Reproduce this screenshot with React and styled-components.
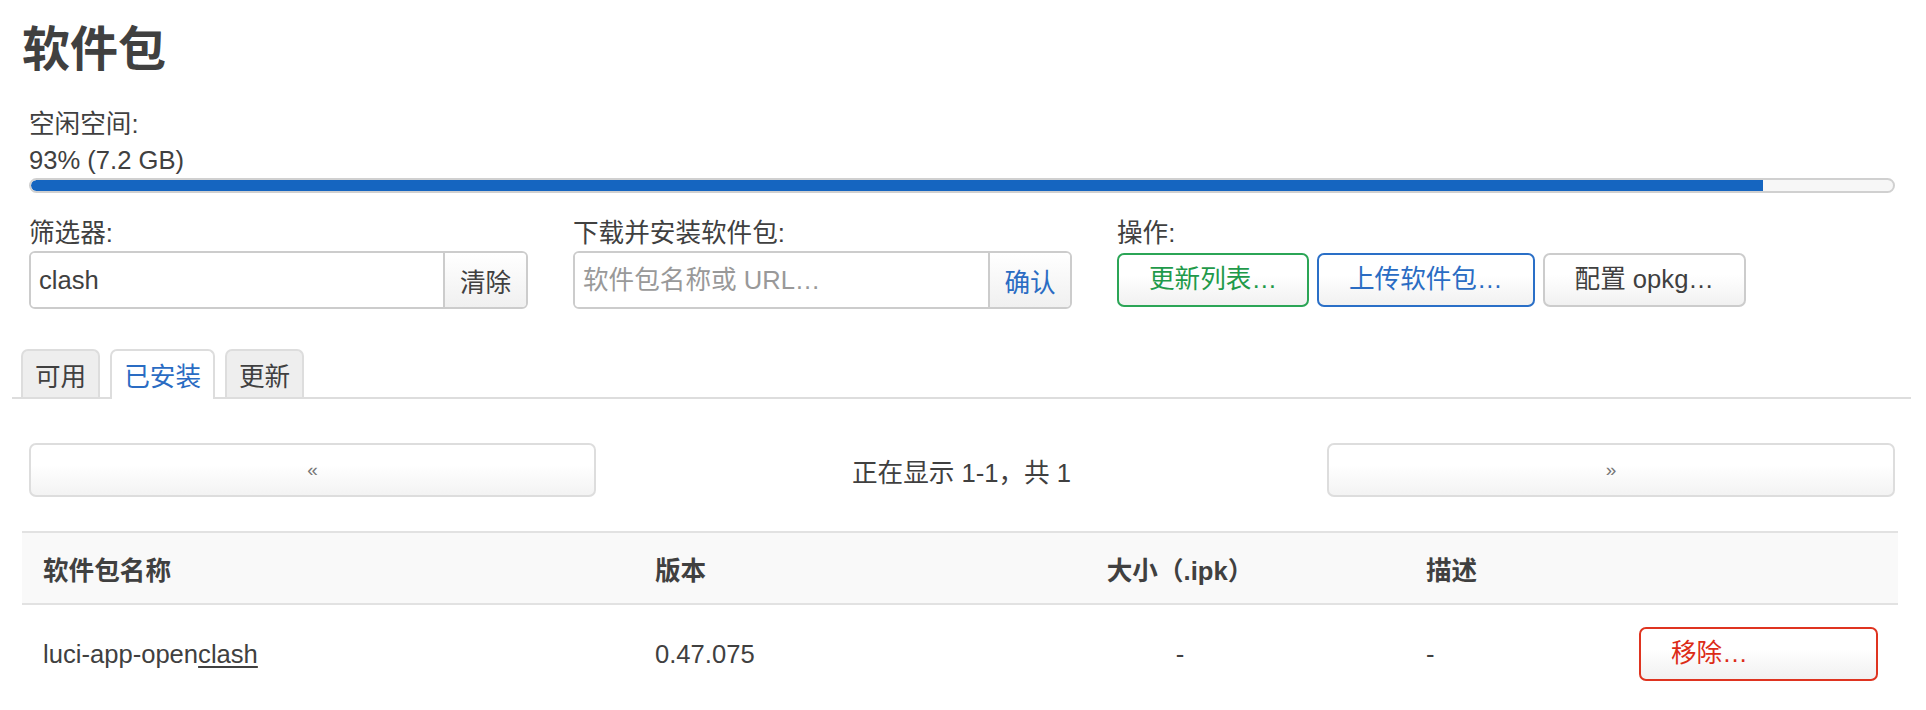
import styled, { createGlobalStyle } from "styled-components";

const GlobalStyle = createGlobalStyle`
  html, body {
    margin: 0;
    padding: 0;
    background: #fff;
  }
  body {
    font-family: "Liberation Sans", "Noto Sans CJK SC", sans-serif;
    font-size: 25.6px;
    color: #404040;
  }
  * { box-sizing: border-box; }
`;

const Page = styled.div`
  width: 1926px;
  padding: 20px 15px 0 12px;
`;

const Title = styled.h2`
  margin: 0 0 0 10px;
  font-size: 48px;
  line-height: 60px;
  font-weight: bold;
  color: #404040;
`;

const Section = styled.div`
  padding: 0 16px 0 17px;
`;

const FreeSpace = styled.div`
  margin-top: 26px;
  line-height: 36px;
`;

const Bar = styled.div`
  height: 15px;
  border: 2px solid #d0d0d0;
  border-radius: 8px;
  background: #f7f7f7;
  overflow: hidden;
`;

const BarFill = styled.div`
  height: 100%;
  background: #1565c0;
  border-radius: 6px 0 0 6px;
`;

const Controls = styled.div`
  display: flex;
  gap: 45px;
  margin-top: 22px;
`;

const Control = styled.div`
  width: ${(p) => (p.$wide ? "auto" : "499px")};
  display: flex;
  flex-direction: column;
`;

const Label = styled.label`
  line-height: 36px;
`;

const InputGroup = styled.div`
  display: flex;
  height: 58px;
  border: 2px solid #ccc;
  border-radius: 6px;
  overflow: hidden;
`;

const TextInput = styled.input`
  flex: 1;
  min-width: 0;
  border: none;
  outline: none;
  padding: 0 8px;
  font: inherit;
  color: #404040;
  background: #fff;
  &::placeholder {
    color: #999;
  }
`;

const AddonButton = styled.button`
  width: ${(p) => p.$w}px;
  border: none;
  border-left: 2px solid #ccc;
  background: linear-gradient(#fff, #f0f0f0);
  font: inherit;
  color: ${(p) => p.$color || "#404040"};
  padding: 0;
  cursor: pointer;
`;

const tones = {
  positive: { border: "#2ba556", text: "#1f9a4a" },
  action: { border: "#2a6fc7", text: "#2a6cc3" },
  negative: { border: "#df3420", text: "#dc2c17" },
  neutral: { border: "#cccccc", text: "#404040" },
};

const ButtonRow = styled.div`
  display: flex;
  gap: 8px;
  margin-top: 2px;
`;

const Button = styled.button`
  height: 54px;
  padding: 0 30px;
  border: 2px solid ${(p) => tones[p.$tone].border};
  border-radius: 7px;
  background: linear-gradient(#fff 40%, #f1f1f1);
  font: inherit;
  line-height: 1;
  color: ${(p) => tones[p.$tone].text};
  cursor: pointer;
  white-space: nowrap;
`;

const Tabs = styled.ul`
  display: flex;
  gap: 10px;
  list-style: none;
  margin: 40px 0 0;
  padding: 0 0 0 9px;
  border-bottom: 2px solid #ddd;
`;

const Tab = styled.li`
  padding: 0 12px;
  display: flex;
  align-items: center;
  border: 2px solid #ddd;
  border-bottom: none;
  border-radius: 7px 7px 0 0;
  background: ${(p) => (p.$active ? "#fff" : "#eeeeee")};
  color: ${(p) => (p.$active ? "#2a6cc3" : "#404040")};
  margin-bottom: ${(p) => (p.$active ? "-2px" : "0")};
  height: ${(p) => (p.$active ? "50px" : "48px")};
  padding-bottom: ${(p) => (p.$active ? "2px" : "0")};
  cursor: pointer;
`;

const Pager = styled.div`
  display: grid;
  grid-template-columns: 567px 1fr 568px;
  align-items: center;
  margin-top: 44px;
  padding: 0 16px 0 17px;
`;

const PagerButton = styled.button`
  height: 54px;
  border: 2px solid #ddd;
  border-radius: 7px;
  background: linear-gradient(#fff 40%, #f3f3f3);
  font-family: inherit;
  font-size: 19px;
  color: #777;
  cursor: pointer;
`;

const PagerText = styled.div`
  text-align: center;
`;

const Table = styled.div`
  margin: 34px 13px 0 10px;
`;

const Row = styled.div`
  display: grid;
  grid-template-columns: 612px 321px 450px 213px 1fr;
  align-items: center;
  background: ${(p) => (p.$head ? "#f9f9f9" : "#fff")};
  border-top: ${(p) => (p.$head ? "2px solid #e2e2e2" : "none")};
  border-bottom: 2px solid #e2e2e2;
  min-height: ${(p) => (p.$head ? "74px" : "0")};
  padding: ${(p) => (p.$head ? "0" : "22px 0 40px")};
  font-weight: ${(p) => (p.$head ? "bold" : "normal")};
`;

const Cell = styled.div`
  padding: 0 ${(p) => (p.$align === "right" ? "20px" : "21px")} 0 21px;
  text-align: ${(p) => p.$align || "left"};
`;

const Match = styled.span`
  text-decoration: underline;
  text-underline-offset: 3px;
`;

const RemoveButton = styled(Button)`
  width: 239px;
  text-align: left;
`;

export default function App() {
  const used = 93;
  return (
    <>
      <GlobalStyle />
      <Page>
        <Title>软件包</Title>
        <Section>
          <FreeSpace>
            <div>空闲空间:</div>
            <div>93% (7.2 GB)</div>
          </FreeSpace>
          <Bar>
            <BarFill style={{ width: `${used}%` }} />
          </Bar>
          <Controls>
            <Control>
              <Label>筛选器:</Label>
              <InputGroup>
                <TextInput defaultValue="clash" />
                <AddonButton $w={83}>清除</AddonButton>
              </InputGroup>
            </Control>
            <Control>
              <Label>下载并安装软件包:</Label>
              <InputGroup>
                <TextInput placeholder="软件包名称或 URL…" />
                <AddonButton $w={82} $color="#2a6cc3">确认</AddonButton>
              </InputGroup>
            </Control>
            <Control $wide>
              <Label>操作:</Label>
              <ButtonRow>
                <Button $tone="positive">更新列表…</Button>
                <Button $tone="action">上传软件包…</Button>
                <Button $tone="neutral">配置 opkg…</Button>
              </ButtonRow>
            </Control>
          </Controls>
        </Section>

        <Tabs>
          <Tab>可用</Tab>
          <Tab $active>已安装</Tab>
          <Tab>更新</Tab>
        </Tabs>

        <Pager>
          <PagerButton>«</PagerButton>
          <PagerText>正在显示 1-1，共 1</PagerText>
          <PagerButton>»</PagerButton>
        </Pager>

        <Table>
          <Row $head>
            <Cell>软件包名称</Cell>
            <Cell>版本</Cell>
            <Cell $align="center">大小（.ipk）</Cell>
            <Cell>描述</Cell>
            <Cell />
          </Row>
          <Row>
            <Cell>
              luci-app-open<Match>clash</Match>
            </Cell>
            <Cell>0.47.075</Cell>
            <Cell $align="center">-</Cell>
            <Cell>-</Cell>
            <Cell $align="right">
              <RemoveButton $tone="negative">移除…</RemoveButton>
            </Cell>
          </Row>
        </Table>
      </Page>
    </>
  );
}
